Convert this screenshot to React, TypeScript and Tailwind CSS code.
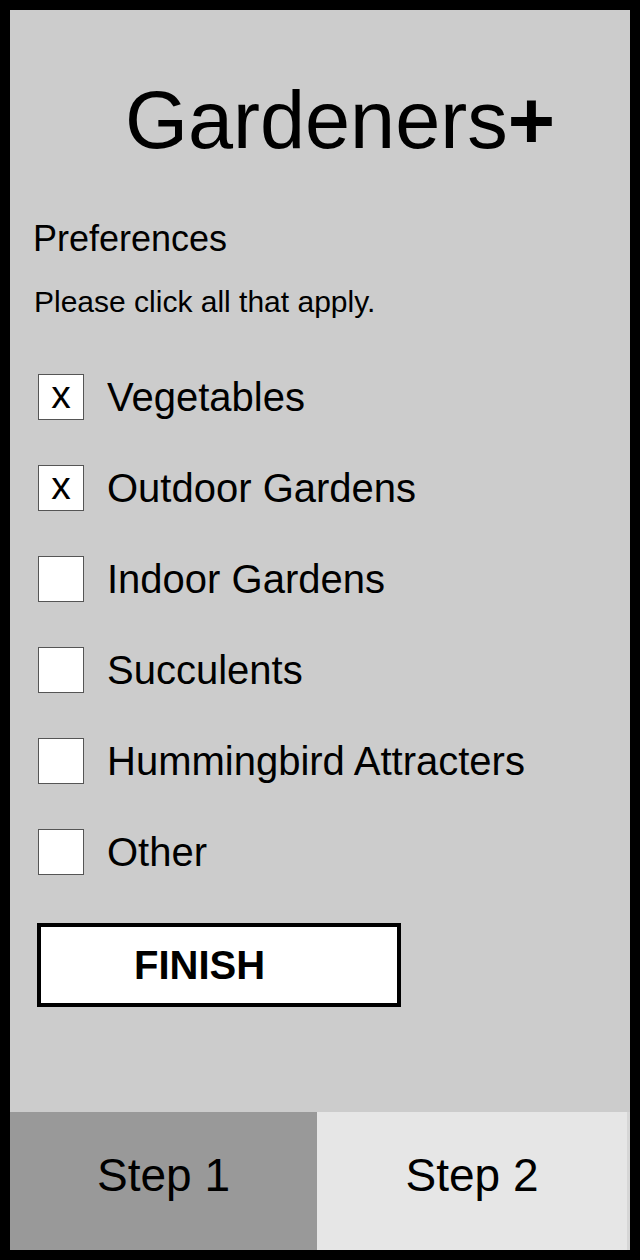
const options = [
  { label: "Vegetables", checked: true },
  { label: "Outdoor Gardens", checked: true },
  { label: "Indoor Gardens", checked: false },
  { label: "Succulents", checked: false },
  { label: "Hummingbird Attracters", checked: false },
  { label: "Other", checked: false },
];

export default function App() {
  return (
    <div className="h-[1260px] w-[640px] bg-black p-[10px] font-['Liberation_Sans',Arial,sans-serif] text-black">
      <div className="flex h-full flex-col bg-[#cccccc]">
        <div className="flex flex-1 flex-col">
          <h1 className="mt-[70px] pl-[115px] text-[81px] leading-none">
            Gardeners<span className="font-bold">+</span>
          </h1>
          <h2 className="mt-[60px] pl-[23px] text-[36px] leading-none">Preferences</h2>
          <p className="mt-[30px] pl-[24px] text-[30px] leading-none">Please click all that apply.</p>

          <div className="mt-[57px] flex flex-col gap-[45px] pl-[28px]">
            {options.map((o) => (
              <label key={o.label} className="flex h-[46px] items-center">
                <span className="flex h-[46px] w-[46px] items-center justify-center border border-[#555555] bg-white pb-[6px] text-[39px] leading-none">
                  {o.checked ? "x" : ""}
                </span>
                <span className="ml-[23px] text-[40px] leading-none">{o.label}</span>
              </label>
            ))}
          </div>

          <button className="mt-[48px] ml-[27px] flex h-[84px] w-[364px] items-center border-4 border-black bg-white pl-[93px] text-[40px] font-bold leading-none">
            FINISH
          </button>
        </div>

        <div className="flex h-[138px]">
          <div className="flex w-[307px] items-center justify-center bg-[#999999] pb-[12px] text-[46px] leading-none">
            Step 1
          </div>
          <div className="flex flex-1 items-center justify-center border-r-[3px] border-[#d6d6d6] bg-[#e6e6e6] pb-[12px] text-[46px] leading-none">
            Step 2
          </div>
        </div>
      </div>
    </div>
  );
}
